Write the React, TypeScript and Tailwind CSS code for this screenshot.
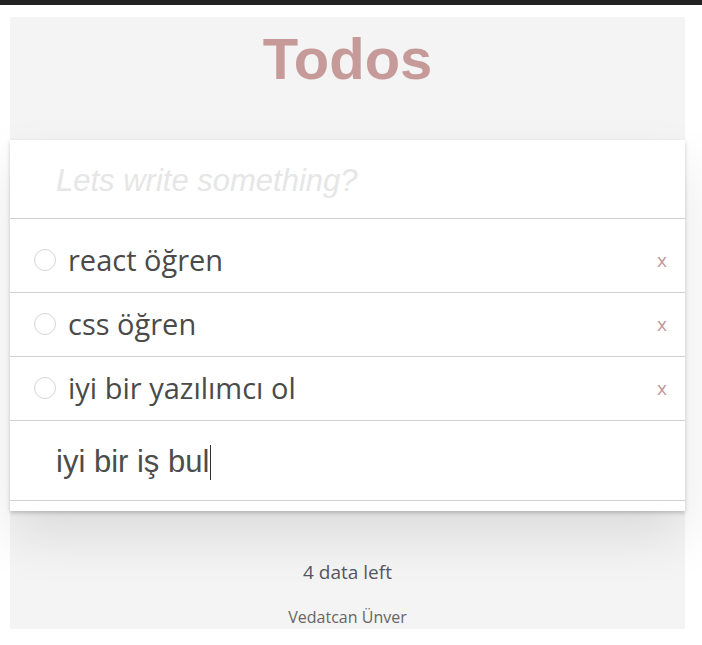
import React from "react";

const todos = ["react öğren", "css öğren", "iyi bir yazılımcı ol"];

export default function App() {
  return (
    <div className="min-h-screen bg-white">
      <div className="h-[5px] bg-[#222222]" />
      <div className="ml-[10px] mt-[12px] w-[675px] bg-[#f4f4f4] pb-[2px]">
        <h1 className="h-[123px] pt-[13px] text-center text-[58px] leading-[58px] font-bold text-[#c79a9a] [font-family:'Liberation_Sans',Arial,sans-serif]">
          Todos
        </h1>

        <section className="bg-white pb-[10px] shadow-[0_2px_4px_0_rgba(0,0,0,0.2),0_25px_50px_0_rgba(0,0,0,0.1)]">
          <input
            className="block h-[79px] w-full border-b border-[#d3d0d0] pl-[46px] pt-[3px] text-[31px] text-[#4d4d4d] outline-none placeholder:italic placeholder:text-[#e6e6e6] [font-family:'Liberation_Sans',Arial,sans-serif]"
            placeholder="Lets write something?"
          />

          <ul className="pt-[10px]">
            {todos.map((todo) => (
              <li
                key={todo}
                className="flex h-[64px] items-center border-b border-[#d3d0d0] pr-[18px] pb-[1px]"
              >
                <span className="ml-[24px] h-[22px] w-[22px] shrink-0 rounded-full border border-[#d6d6d6]" />
                <span className="ml-[12px] flex-1 text-[29px] text-[#4a4a4a] [font-family:'Open_Sans',sans-serif]">
                  {todo}
                </span>
                <button className="text-[19px] leading-none text-[#c49797] [font-family:'Open_Sans',sans-serif]">
                  x
                </button>
              </li>
            ))}
          </ul>

          <div className="flex h-[80px] items-center border-b border-[#d3d0d0] pl-[46px] pt-[3px] text-[31px] text-[#4d4d4d] [font-family:'Liberation_Sans',Arial,sans-serif]">
            <span>iyi bir iş bul</span>
            <span className="ml-[1px] h-[35px] w-[1px] bg-[#333333]" />
          </div>
        </section>

        <footer className="text-center [font-family:'Open_Sans',sans-serif]">
          <p className="mt-[49px] text-[19px] leading-[24px] text-[#555566]">
            4 data left
          </p>
          <p className="mt-[23px] text-[16px] leading-[20px] text-[#666666]">
            Vedatcan Ünver
          </p>
        </footer>
      </div>
    </div>
  );
}
